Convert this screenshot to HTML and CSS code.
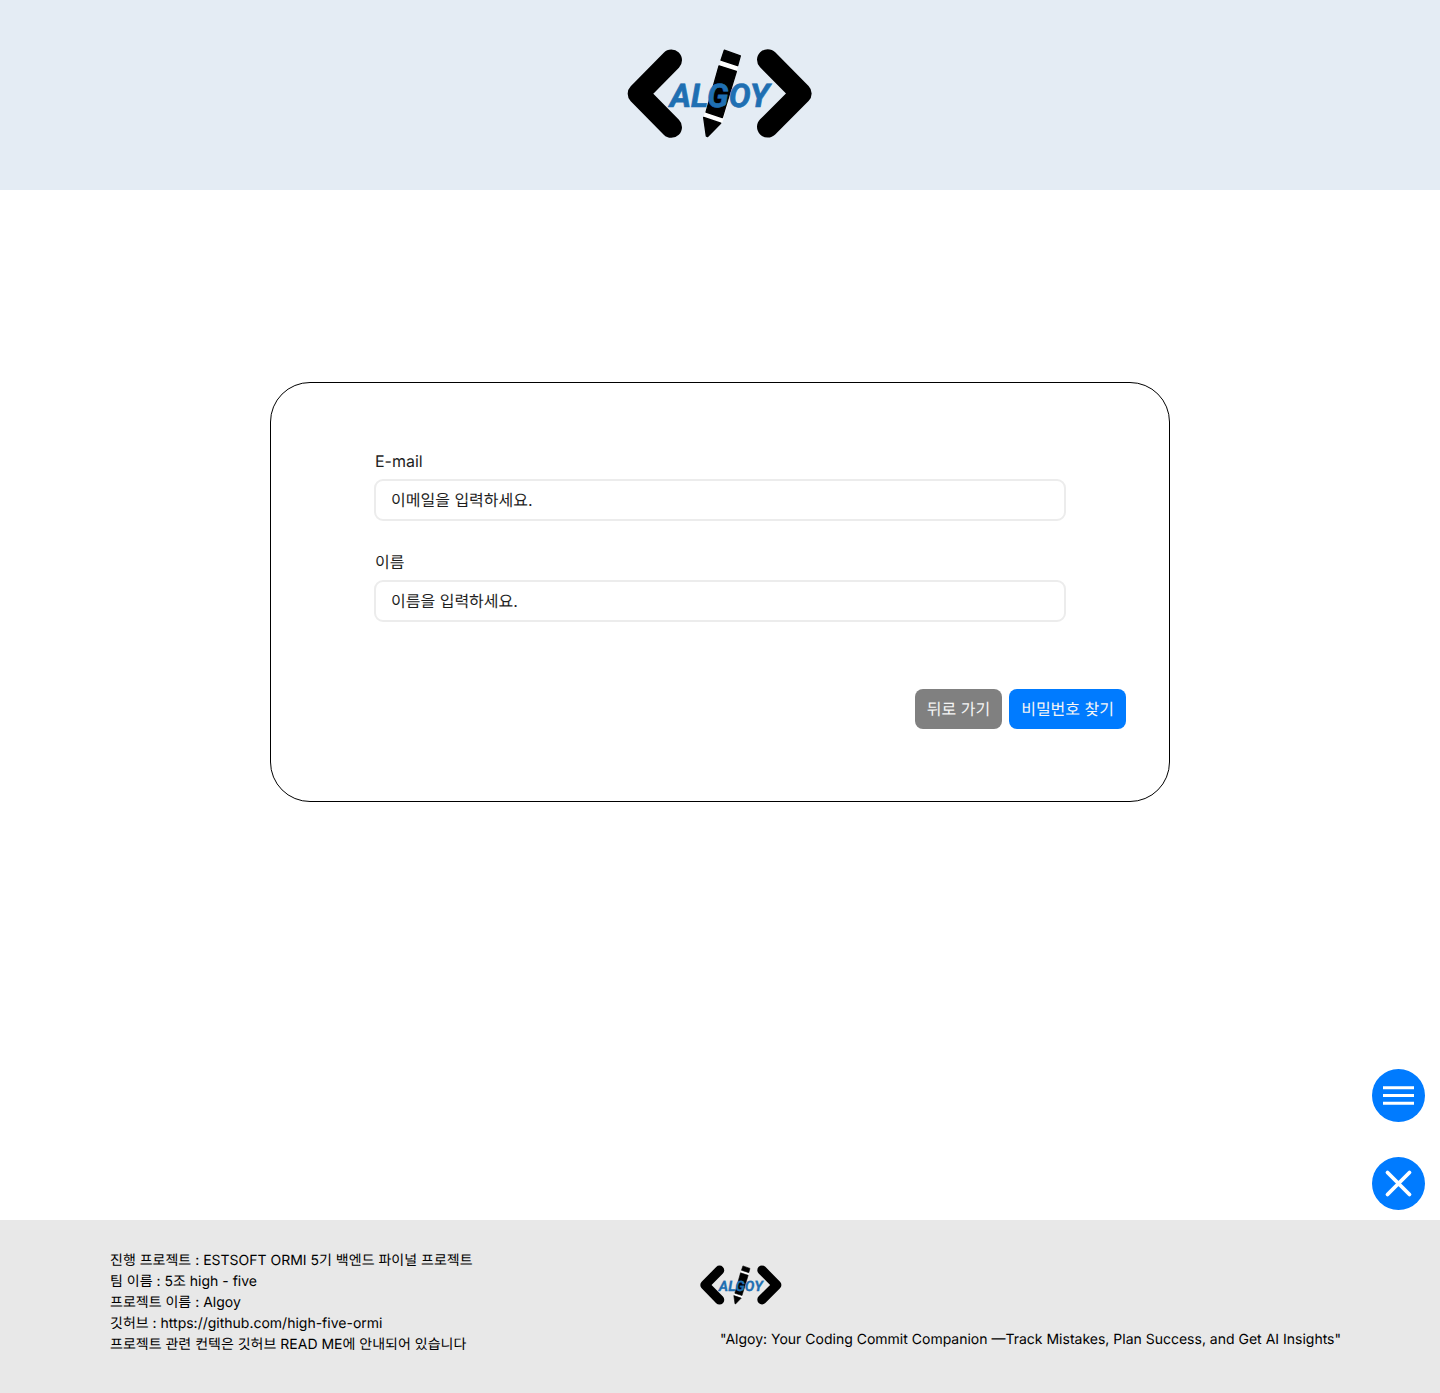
FILE: index.html
```html
<!DOCTYPE html>
<html lang="ko">
<head>
  <meta charset="utf-8">
  <meta name="viewport" content="width=device-width, initial-scale=1">
  <title>Algoy - 비밀번호 찾기</title>
  <link rel="stylesheet" href="styles.css">
</head>
<body>
  <svg class="symbols" aria-hidden="true">
    <symbol id="logo" viewBox="51 54 558 272">
      <g fill="none" stroke="#000" stroke-width="64" stroke-linecap="round" stroke-linejoin="round">
        <path d="M184 90 85 190.500 184 291"/>
        <path d="M473 89 573 190 473 290"/>
      </g>
      <path fill="#fff" d="M333 90 385 107 337 278 281 260Z"/>
      <path fill="#000" stroke="#000" stroke-width="4" stroke-linejoin="round" d="M343 60 391 77 383 106 333 90ZM327 107 379 124 337 262 288 246ZM281 262 332 279 293 319 289 318Z"/>
      <text class="logo-text" x="179" y="229">ALGOY</text>
    </symbol>
  </svg>

  <header class="header">
    <a href="#" aria-label="Algoy"><svg class="logo"><use href="#logo"/></svg></a>
  </header>

  <main class="main">
    <form class="card">
      <div class="fields">
        <div class="field">
          <label for="email">E-mail</label>
          <input id="email" type="email" placeholder="이메일을 입력하세요.">
        </div>
        <div class="field">
          <label for="name">이름</label>
          <input id="name" type="text" placeholder="이름을 입력하세요.">
        </div>
      </div>
      <div class="actions">
        <button class="btn btn-back" type="button">뒤로 가기</button>
        <button class="btn btn-find" type="submit">비밀번호 찾기</button>
      </div>
    </form>
  </main>

  <div class="floating">
    <button class="round" type="button" aria-label="메뉴">
      <svg viewBox="0 0 53 53"><path d="M11 18.700h31M11 26.500h31M11 34.300h31" stroke="#fff" stroke-width="3"/></svg>
    </button>
    <button class="round" type="button" aria-label="닫기">
      <svg viewBox="0 0 53 53"><path d="M15.500 15.500l22 22M37.500 15.500l-22 22" stroke="#fff" stroke-width="3.800" stroke-linecap="round"/></svg>
    </button>
  </div>

  <footer class="footer">
    <div class="info">
      <p>진행 프로젝트 : ESTSOFT ORMI 5기 백엔드 파이널 프로젝트</p>
      <p>팀 이름 : 5조 high - five</p>
      <p>프로젝트 이름 : Algoy</p>
      <p>깃허브 : https://github.com/high-five-ormi</p>
      <p>프로젝트 관련 컨텍은 깃허브 READ ME에 안내되어 있습니다</p>
    </div>
    <div class="brand">
      <svg class="logo logo-small" role="img" aria-label="Algoy"><use href="#logo"/></svg>
      <p>"Algoy: Your Coding Commit Companion —Track Mistakes, Plan Success, and Get AI Insights"</p>
    </div>
  </footer>
</body>
</html>
```

FILE: styles.css
```css
* {
  box-sizing: border-box;
}

body {
  margin: 0;
  min-height: 100vh;
  display: flex;
  flex-direction: column;
  background: #fff;
  color: #000;
  font-family: Inter, "Noto Sans CJK KR", sans-serif;
  font-size: 16px;
  line-height: 24px;
  text-rendering: geometricPrecision;
}

p {
  margin: 0;
}

.symbols {
  display: none;
}

.logo {
  display: block;
  width: 186px;
  height: 91px;
}

.logo-text {
  fill: #1f6fb2;
  stroke: #1f6fb2;
  stroke-width: 2px;
  font-family: Roboto, sans-serif;
  font-size: 98px;
  font-style: italic;
  font-weight: 700;
}

.header {
  display: flex;
  justify-content: center;
  padding: 48px 0 51px;
  background: #e4ecf4;
}

.main {
  flex: 1;
  padding: 192px 24px;
}

.card {
  max-width: 900px;
  margin: 0 auto;
  padding: 66px 43px 72px;
  border: 1px solid #000;
  border-radius: 40px;
}

.fields {
  display: flex;
  flex-direction: column;
  gap: 29px;
  padding: 0 60px;
}

.field {
  display: flex;
  flex-direction: column;
  gap: 6px;
  color: #1e1e1e;
}

.field label {
  padding-left: 1px;
}

.field input {
  width: 100%;
  height: 42px;
  padding: 0 15px;
  border: 2px solid #ececec;
  border-radius: 9px;
  background: #fff;
  color: #1e1e1e;
  font: inherit;
  text-rendering: inherit;
}

.field input::placeholder {
  color: #1e1e1e;
  opacity: 1;
}

.actions {
  display: flex;
  justify-content: flex-end;
  gap: 7px;
  margin-top: 67px;
}

.btn {
  height: 40px;
  padding: 0 12px;
  border: 0;
  border-radius: 8px;
  color: #f5f5f5;
  font: inherit;
  text-rendering: inherit;
}

.btn-back {
  background: #808080;
}

.btn-find {
  background: #007bff;
}

.floating {
  position: fixed;
  right: 15px;
  bottom: 183px;
  display: flex;
  flex-direction: column;
  gap: 35px;
}

.round {
  width: 53px;
  height: 53px;
  padding: 0;
  border: 0;
  border-radius: 50%;
  background: #007bff;
}

.round svg {
  display: block;
}

.footer {
  display: grid;
  grid-template-columns: 1fr 1fr;
  padding: 30px 0 38px;
  background: #e8e8e8;
  font-size: 14px;
  line-height: 21px;
}

.info {
  padding-left: 110px;
}

.brand {
  padding-top: 15px;
}

.logo-small {
  width: 82px;
  height: 40px;
  margin: 0 0 24px -20px;
}
```
